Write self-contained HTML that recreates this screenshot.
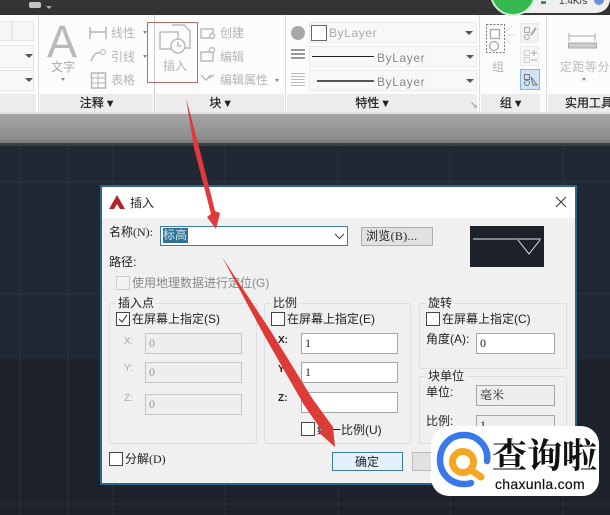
<!DOCTYPE html>
<html><head><meta charset="utf-8">
<style>
html,body{margin:0;padding:0;background:#222833}
#r{position:relative;width:610px;height:515px;overflow:hidden;background:#222833;font-family:"Liberation Sans","Noto Sans CJK SC",sans-serif;font-size:12px;color:#222;filter:blur(.3px)}
#r div{position:absolute;box-sizing:border-box;white-space:nowrap}
.t{line-height:14px}
.g{color:#b4b4b4}
.cb{width:14px;height:14px;border:1px solid #444;background:#fff}
.in{height:21px;border:1px solid #a5a5a5;background:#fff;font-family:"Liberation Serif","Noto Serif CJK SC",serif;padding-left:3px;line-height:19px;font-size:12px}
.dis{background:#eeeeee;border:1px solid #c6c6c6;color:#999;font-size:12px}
.grp{border:1px solid #dfdfdf;border-radius:2px}
.cap{background:#f0f0f0;padding:0 2px;line-height:14px;font-size:12px}
.pt{background:#ececec;top:94px;height:18px;text-align:center;font-size:12px;line-height:18px;color:#222;-webkit-text-stroke:.25px #222}
.sel{left:309px;width:168px;height:21px;background:#f8f8f8;border:1px solid #ebebeb}
.tri{width:0;height:0;border-left:4px solid transparent;border-right:4px solid transparent;border-top:4px solid #555}
.sm{border-top-color:#888;border-left-width:2px;border-right-width:2px;border-top-width:3px}
</style></head><body>
<div id="r">
<!-- canvas grid -->
<svg style="position:absolute;left:0;top:144px" width="610" height="371">
<rect width="610" height="371" fill="#222833"/>
<rect y="215" width="610" height="156" fill="#1d222c"/>
<g stroke="#2b313c" stroke-width="1">
<path d="M20 0V371M68 0V371M113 0V371M225 0V371M338 0V371M450 0V371M563 0V371M0 38H610M0 150H610M0 360H610"/>
</g>
</svg>
<!-- top bar -->
<div style="left:0;top:0;width:610px;height:15px;background:#343434"></div>
<div style="left:29px;top:2px;width:12px;height:6px;background:#c4c4c4;border-radius:2px"></div>
<div class="tri" style="left:46px;top:6px;border-top-color:#aaa;border-left-width:3px;border-right-width:3px;border-top-width:3px"></div>
<!-- ribbon -->
<div style="left:0;top:15px;width:610px;height:98px;background:#fcfcfc"></div>
<div style="left:0;top:112px;width:610px;height:2px;background:#e2e2e2"></div>
<div style="left:0;top:114px;width:610px;height:26px;background:linear-gradient(#a6a6a6,#8a8a8a)"></div>
<div style="left:0;top:140px;width:610px;height:3px;background:#7d7d7d"></div>
<div style="left:0;top:143px;width:610px;height:3px;background:#3a3f47"></div>
<!-- panel titles -->
<div class="pt" style="left:0;width:36px"></div>
<div class="pt" style="left:40px;width:113px">注释 ▾</div>
<div class="pt" style="left:156px;width:128px">块 ▾</div>
<div class="pt" style="left:287px;width:190px;padding-right:20px">特性 ▾</div>
<div class="pt" style="left:481px;width:59px">组 ▾</div>
<div class="pt" style="left:548px;width:62px;text-align:left;padding-left:17px">实用工具</div>
<div style="left:38px;top:15px;width:1px;height:97px;background:#ddd"></div>
<div style="left:154px;top:15px;width:1px;height:97px;background:#ccc"></div>
<div style="left:285px;top:15px;width:1px;height:97px;background:#ddd"></div>
<div style="left:479px;top:15px;width:1px;height:97px;background:#ddd"></div>
<div style="left:546px;top:15px;width:1px;height:97px;background:#ddd"></div>
<!-- left stub -->
<div style="left:-1px;top:21px;width:13px;height:20px;background:#f6f6f6;border:1px solid #e6e6e6"></div>
<div style="left:12px;top:21px;width:22px;height:20px;background:#f6f6f6;border:1px solid #e6e6e6"></div>
<div style="left:-1px;top:45px;width:35px;height:23px;background:#f8f8f8;border:1px solid #e6e6e6"></div>
<div style="left:-1px;top:70px;width:35px;height:21px;background:#f8f8f8;border:1px solid #e6e6e6"></div>
<div class="tri" style="left:25px;top:54px"></div>
<div class="tri" style="left:25px;top:78px"></div>
<!-- annotate -->
<div style="left:47px;top:16px;font-size:45px;line-height:52px;color:#b9b9b9">A</div>
<div class="t g" style="left:51px;top:60px;color:#aaa">文字</div>
<div class="tri sm" style="left:61px;top:78px"></div>
<svg style="position:absolute;left:88px;top:24px" width="60" height="66" fill="none" stroke="#b5b5b5">
<path d="M2 3V15M18 3V15M2 8H18" stroke-width="1.500"/>
<path d="M3 37C6 30 8 28 12 29" stroke-width="1.500"/><circle cx="15" cy="28" r="2.500"/>
<rect x="3.500" y="49" width="14" height="15" stroke-width="1.500"/><path d="M4 54H17M4 59H17M10 49V64"/>
</svg>
<div class="t g" style="left:111px;top:26px">线性</div>
<div class="t g" style="left:111px;top:50px">引线</div>
<div class="t g" style="left:111px;top:73px">表格</div>
<div class="tri sm" style="left:143px;top:31px"></div>
<div class="tri sm" style="left:143px;top:55px"></div>
<!-- insert -->
<svg style="position:absolute;left:158px;top:22px" width="34" height="34" fill="none" stroke="#bbb" stroke-width="1.500">
<path d="M14 3H26L32 9V26H24"/><path d="M2 10H20V27H2Z"/><circle cx="20" cy="24" r="7" fill="#fcfcfc"/><path d="M20 20V24H23"/>
</svg>
<div class="t g" style="left:163px;top:59px;color:#b4b4b4">插入</div>
<div style="left:147px;top:22px;width:51px;height:61px;border:1.500px solid #b96a6a"></div>
<svg style="position:absolute;left:199px;top:26px" width="20" height="60" fill="none" stroke="#bbb" stroke-width="1.500">
<path d="M2 3H14V12H2Z"/><circle cx="13" cy="10" r="2.500" fill="#fcfcfc"/>
<path d="M2 26H14V35H2Z"/><circle cx="13" cy="24" r="2.500" fill="#fcfcfc"/>
<path d="M2 49L7 54L12 49M10 52L15 49"/>
</svg>
<div class="t g" style="left:220px;top:26px">创建</div>
<div class="t g" style="left:220px;top:50px">编辑</div>
<div class="t g" style="left:220px;top:73px">编辑属性</div>
<div class="tri sm" style="left:275px;top:79px"></div>
<!-- properties -->
<div style="left:291px;top:26px;width:14px;height:14px;border-radius:50%;background:#a8a8a8"></div>
<div style="left:291px;top:49px;width:14px;height:12px;background:repeating-linear-gradient(#999 0 2px,#fcfcfc 2px 4px)"></div>
<div style="left:291px;top:73px;width:14px;height:13px;background:repeating-linear-gradient(#bbb 0 1px,#fcfcfc 1px 3px)"></div>
<div class="sel" style="top:22px"></div>
<div class="sel" style="top:46px"></div>
<div class="sel" style="top:70px"></div>
<div style="left:311px;top:25px;width:16px;height:16px;border:1px solid #666;background:#fff"></div>
<div class="t" style="left:329px;top:26px;color:#aaa;letter-spacing:.6px">ByLayer</div>
<div style="left:312px;top:56px;width:62px;height:1px;background:#222"></div>
<div style="left:317px;top:80px;width:57px;height:2px;background:#555"></div>
<div class="t" style="left:377px;top:51px;color:#888;letter-spacing:.6px">ByLayer</div>
<div class="t" style="left:377px;top:75px;color:#888;letter-spacing:.6px">ByLayer</div>
<div class="tri" style="left:465px;top:31px"></div>
<div class="tri" style="left:466px;top:55px"></div>
<div class="tri" style="left:466px;top:79px"></div>
<div style="left:470px;top:102px;font-size:8px;line-height:8px;color:#777;-webkit-text-stroke:0">↘</div>
<!-- group -->
<svg style="position:absolute;left:484px;top:22px" width="58" height="70" fill="none" stroke="#a8a8a8">
<rect x="2.500" y="2.500" width="18" height="28" stroke-dasharray="2 1.500" stroke="#777"/>
<rect x="6.500" y="7.500" width="9" height="9" stroke-width="1.300"/>
<circle cx="10" cy="24" r="4.500" stroke-width="1.300"/>
<path d="M21 10L28 4M23 13L31 13M22 16L27 22" stroke="#ddd"/>
<rect x="36.500" y="1.500" width="18" height="19" fill="#f2f2f2" stroke="#eaeaea"/>
<rect x="40.500" y="5.500" width="5" height="5"/><circle cx="43" cy="15" r="2.500"/><path d="M47 13L52 6" stroke-width="2"/>
<rect x="36.500" y="24.500" width="18" height="19" fill="#f7f7f7" stroke="#eaeaea"/>
<rect x="40.500" y="28.500" width="5" height="5" stroke-dasharray="1 1"/><rect x="40.500" y="35.500" width="5" height="5" stroke-dasharray="1 1"/><path d="M47 31H53M50 28V34M47 38H53"/>
<rect x="36.500" y="47.500" width="19" height="20" fill="#cfe3f6" stroke="#8db4d9"/>
<rect x="40.500" y="52.500" width="5" height="5" stroke="#777"/><circle cx="43" cy="61" r="2.500" stroke="#777"/><path d="M47 55L53 63L49 63Z" stroke="#777"/>
</svg>
<div class="t g" style="left:492px;top:60px;color:#b4b4b4">组</div>
<!-- util -->
<svg style="position:absolute;left:567px;top:30px" width="31" height="20" fill="none" stroke="#aaa">
<path d="M2 3V11M28 3V11M2 6H28"/><rect x="1.500" y="13" width="28" height="5" fill="#ccc"/>
</svg>
<div class="t g" style="left:560px;top:60px;color:#bbb;letter-spacing:.5px">定距等分</div>
<div class="tri sm" style="left:582px;top:78px"></div>
<!-- widget -->
<div style="left:510px;top:-20px;width:100px;height:33px;background:#efefef;border-radius:0 0 14px 0"></div>
<div style="left:490px;top:-30px;width:46px;height:46px;border-radius:50%;background:#35b94f;border:2px solid #cfe9d4"></div>
<div class="t" style="left:559px;top:-5px;font-size:10px;color:#333">1.4K/s</div>
<div style="left:541px;top:1px;width:5px;height:3px;background:#2a9d4a"></div>
<div style="left:594px;top:-5px;width:10px;height:10px;border-radius:50%;background:#6f8fd6"></div>
<!-- dialog -->
<div style="left:100px;top:185px;width:477px;height:300px;background:#f0f0f0;border:2px solid #2a6685"></div>
<div style="left:102px;top:187px;width:473px;height:31px;background:#fff"></div>
<svg style="position:absolute;left:109px;top:195px" width="16" height="14"><path d="M0 14L8 0L16 14H11L8 9L5 14Z" fill="#b2222a"/></svg>
<div class="t" style="left:130px;top:196px">插入</div>
<svg style="position:absolute;left:555px;top:196px" width="12" height="12" stroke="#333" stroke-width="1"><path d="M1 1L11 11M11 1L1 11"/></svg>
<div class="t" style="left:109px;top:225px;font-family:'Liberation Serif','Noto Sans CJK SC',serif">名称(N):</div>
<div style="left:160px;top:226px;width:188px;height:20px;background:#fff;border:1px solid #3d7ea6"></div>
<div class="t" style="left:163px;top:228px;background:#2f7296;color:#cfe4f0;width:25px;height:15px">标高</div>
<svg style="position:absolute;left:334px;top:233px" width="11" height="7" fill="none" stroke="#444"><path d="M1 1L5.500 5.500L10 1"/></svg>
<div style="left:361px;top:227px;width:72px;height:19px;background:#e1e1e1;border:1px solid #adadad"></div>
<div class="t" style="left:366px;top:229px;font-family:'Liberation Serif','Noto Sans CJK SC',serif;letter-spacing:.3px">浏览(B)...</div>
<svg style="position:absolute;left:470px;top:226px" width="74" height="41">
<rect width="74" height="41" fill="#1d2129"/>
<path d="M3 13H71M48 14L59 28L70 14" stroke="#e8e8e8" fill="none"/>
</svg>
<div class="t" style="left:109px;top:255px">路径:</div>
<div class="cb" style="left:116px;top:276px;border-color:#ccc;background:#f2f2f2"></div>
<div class="t" style="left:132px;top:276px;color:#888">使用地理数据进行定位(G)</div>
<!-- insertion -->
<div class="grp" style="left:109px;top:303px;width:148px;height:141px"></div>
<div class="cap" style="left:116px;top:296px">插入点</div>
<div class="cb" style="left:116px;top:312px"></div>
<svg style="position:absolute;left:116px;top:312px" width="14" height="14" fill="none" stroke="#444" stroke-width="1.200"><path d="M3 7L6 10L11 3"/></svg>
<div class="t" style="left:132px;top:312px">在屏幕上指定(S)</div>
<div class="t" style="left:124px;top:335px;font-size:10px;color:#aaa">X:</div>
<div class="t" style="left:124px;top:362px;font-size:10px;color:#aaa">Y:</div>
<div class="t" style="left:124px;top:392px;font-size:10px;color:#aaa">Z:</div>
<div class="in dis" style="left:145px;top:333px;width:97px">0</div>
<div class="in dis" style="left:145px;top:362px;width:97px">0</div>
<div class="in dis" style="left:145px;top:394px;width:97px">0</div>
<!-- scale -->
<div class="grp" style="left:264px;top:303px;width:147px;height:141px"></div>
<div class="cap" style="left:271px;top:296px">比例</div>
<div class="cb" style="left:271px;top:312px"></div>
<div class="t" style="left:287px;top:312px">在屏幕上指定(E)</div>
<div class="t" style="left:278px;top:334px;font-size:10px;font-weight:bold">X:</div>
<div class="t" style="left:278px;top:363px;font-size:10px;font-weight:bold">Y:</div>
<div class="t" style="left:278px;top:392px;font-size:10px;font-weight:bold">Z:</div>
<div class="in" style="left:301px;top:333px;width:97px">1</div>
<div class="in" style="left:301px;top:362px;width:97px">1</div>
<div class="in" style="left:301px;top:392px;width:97px"></div>
<div class="cb" style="left:301px;top:422px"></div>
<div class="t" style="left:317px;top:423px">统一比例(U)</div>
<!-- rotation -->
<div class="grp" style="left:419px;top:303px;width:148px;height:66px"></div>
<div class="cap" style="left:426px;top:296px">旋转</div>
<div class="cb" style="left:426px;top:312px"></div>
<div class="t" style="left:442px;top:312px">在屏幕上指定(C)</div>
<div class="t" style="left:426px;top:332px">角度(A):</div>
<div class="in" style="left:476px;top:333px;width:79px">0</div>
<!-- unit -->
<div class="grp" style="left:419px;top:376px;width:148px;height:68px"></div>
<div class="cap" style="left:426px;top:369px">块单位</div>
<div class="t" style="left:426px;top:385px">单位:</div>
<div class="in" style="left:476px;top:385px;width:79px;background:#eee">毫米</div>
<div class="t" style="left:426px;top:414px">比例:</div>
<div class="in" style="left:476px;top:415px;width:79px;background:#eee">1</div>
<!-- bottom -->
<div class="cb" style="left:109px;top:452px"></div>
<div class="t" style="left:125px;top:452px;font-family:'Liberation Serif','Noto Sans CJK SC',serif">分解(D)</div>
<div style="left:332px;top:452px;width:71px;height:19px;background:#e4f1fb;border:1px solid #3d7a96"></div>
<div class="t" style="left:355px;top:455px">确定</div>
<div style="left:412px;top:452px;width:60px;height:19px;background:#e1e1e1;border:1px solid #bbb"></div>
<!-- watermark -->
<div style="left:431px;top:426px;width:168px;height:70px;background:#fff;border-radius:20px 18px 16px 18px"></div>
<svg style="position:absolute;left:434px;top:430px" width="60" height="60" fill="none">
<path d="M53 31C55 16 43 5 30 5C16 5 6 16 6 30C6 44 17 54 30 54C33 54 35 54 37 53" stroke="#3a78e8" stroke-width="6.500" stroke-linecap="round"/>
<circle cx="29" cy="32" r="10.500" stroke="#f5a623" stroke-width="7"/>
<path d="M37 40L47 47" stroke="#f5a623" stroke-width="7" stroke-linecap="round"/>
</svg>
<div style="left:492px;top:433px;font-size:35px;line-height:42px;font-weight:bold;color:#111;font-family:'Noto Serif CJK SC','Noto Sans CJK SC',serif;width:108px;overflow:hidden">查询啦</div>
<div style="left:495px;top:476px;font-size:14px;line-height:16px;color:#111;letter-spacing:.3px;-webkit-text-stroke:.2px #111">chaxunla.com</div>
<!-- arrows -->
<svg style="position:absolute;left:0;top:0" width="610" height="515">
<path d="M186 98L199 147L215 211L220 213L216 229L207 217L211 214L194 148Z" fill="#de3a3a"/>
<path d="M222 257L272 333L312 398L333 427L335 447L317 431L322 431L304 405L264 335Z" fill="#dd3b38"/>
</svg>
</div>
</body></html>
